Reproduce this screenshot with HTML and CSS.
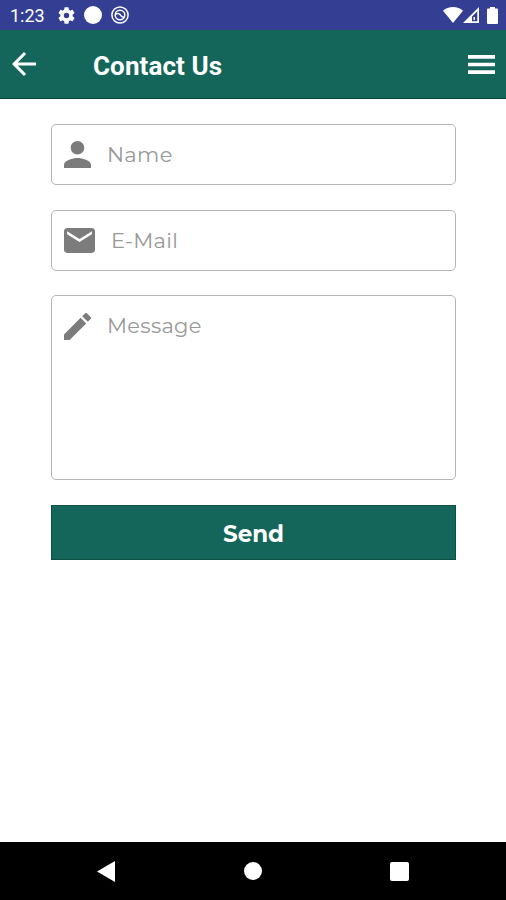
FILE: index.html
```html
<!DOCTYPE html>
<html lang="en">
<head>
  <meta charset="UTF-8" />
  <meta name="viewport" content="width=device-width, initial-scale=1" />
  <title>Contact Us</title>
  <link rel="stylesheet" href="styles.css">
</head>
<body>
  <div class="status-bar">
    <span class="time">1:23</span>
    <svg class="gear" viewBox="2 2 20 20"><path d="M19.14 12.94c.04-.3.06-.61.06-.94s-.02-.64-.07-.94l2.03-1.58a.49.49 0 0 0 .12-.61l-1.92-3.32a.49.49 0 0 0-.59-.22l-2.39.96c-.5-.38-1.03-.7-1.62-.94l-.36-2.54a.48.48 0 0 0-.48-.41h-3.84c-.24 0-.43.17-.47.41l-.36 2.54c-.59.24-1.13.57-1.62.94l-2.39-.96a.48.48 0 0 0-.59.22L2.74 8.87c-.12.21-.08.47.12.61l2.03 1.58c-.05.3-.09.63-.09.94s.02.64.07.94l-2.03 1.58a.49.49 0 0 0-.12.61l1.92 3.32c.12.22.37.29.59.22l2.39-.96c.5.38 1.03.7 1.62.94l.36 2.54c.05.24.24.41.48.41h3.84c.24 0 .44-.17.47-.41l.36-2.54c.59-.24 1.13-.56 1.62-.94l2.39.96c.22.08.47 0 .59-.22l1.92-3.32a.48.48 0 0 0-.12-.61zM12 15.2a3.2 3.2 0 1 1 0-6.4 3.2 3.2 0 0 1 0 6.4z"/></svg>
    <span class="dot"></span>
    <svg class="ring" viewBox="0 0 18 18" stroke="#fff" stroke-width="1.5">
      <circle cx="9" cy="9" r="8.1"/>
      <circle cx="9" cy="9" r="4.8"/>
      <path d="M4.800 8c2.200-1 3.700-.4 4.700 1.200.9 1.500 2 2.100 3.600 1.900"/>
    </svg>
    <div class="signals">
      <svg class="wifi" viewBox="0 0 20 16"><path d="M10 16 0 3.700C2.700 1.200 6.200 0 10 0s7.300 1.200 10 3.700z"/></svg>
      <svg class="cell" viewBox="0 0 16 16"><path fill-rule="evenodd" d="M16 0v16H0zM9 9.500v4.800h5.300V4.200z"/><path d="M10.500 10h1.500v3h-1.500z"/></svg>
      <svg class="battery" viewBox="0 0 11 17"><path d="M3 0h5v1.500h2q1 0 1 1V16q0 1-1 1H1q-1 0-1-1V2.500q0-1 1-1h2z"/></svg>
    </div>
  </div>

  <header class="app-bar">
    <button class="icon-btn" aria-label="Back">
      <svg class="back" viewBox="4 4 16 16"><path d="M20 11H7.830l5.590-5.590L12 4l-8 8 8 8 1.410-1.410L7.830 13H20z"/></svg>
    </button>
    <h1>Contact Us</h1>
    <button class="icon-btn" aria-label="Menu">
      <svg class="menu" viewBox="3 6 18 12" preserveAspectRatio="none"><path d="M3 18h18v-2.300H3zm0-4.850h18v-2.300H3zM3 6v2.300h18V6z"/></svg>
    </button>
  </header>

  <main>
    <form class="contact-form">
      <label class="field">
        <svg class="person" viewBox="4 4 16 16"><path d="M12 12c2.210 0 4-1.790 4-4s-1.790-4-4-4-4 1.790-4 4 1.790 4 4 4zm0 2c-2.670 0-8 1.340-8 4v2h16v-2c0-2.660-5.330-4-8-4z"/></svg>
        <input type="text" class="name" placeholder="Name">
      </label>
      <label class="field">
        <svg class="mail" viewBox="2 4 20 16"><path d="M20 4H4c-1.100 0-2 .9-2 2v12c0 1.100.9 2 2 2h16c1.100 0 2-.9 2-2V6c0-1.100-.9-2-2-2zm0 4-8 5-8-5V6l8 5 8-5z"/></svg>
        <input type="text" class="email" placeholder="E-Mail">
      </label>
      <label class="field message-field">
        <svg class="pencil" viewBox="3 3 18 18"><path d="M3 17.250V21h3.750L17.810 9.940l-3.750-3.750zM20.710 7.040a1 1 0 0 0 0-1.410l-2.340-2.340a1 1 0 0 0-1.410 0l-1.830 1.830 3.750 3.750z"/></svg>
        <textarea class="message" placeholder="Message"></textarea>
      </label>
      <button type="button" class="send-btn">Send</button>
    </form>
  </main>

  <nav class="nav-bar">
    <svg class="nav-back" viewBox="0 0 18 21"><path d="M18 0v21L0 10.500z"/></svg>
    <span class="nav-home"></span>
    <span class="nav-recent"></span>
  </nav>
</body>
</html>
```

FILE: styles.css
```css
* {
  box-sizing: border-box;
}
body {
  margin: 0;
  height: 900px;
  display: flex;
  flex-direction: column;
  background: #fff;
  font-family: Montserrat, Inter, sans-serif;
}
svg {
  display: block;
  flex: none;
  fill: currentColor;
}

/* Status bar */
.status-bar {
  height: 30px;
  display: flex;
  align-items: center;
  padding: 0 8px 0 10px;
  background: #343f94;
  color: #fff;
}
.time {
  width: 48px;
  font-family: Roboto, sans-serif;
  font-size: 18px;
  line-height: 30px;
  padding-top: 2px;
}
.gear {
  width: 17px;
  height: 17px;
}
.dot {
  width: 18px;
  height: 18px;
  margin: 0 9px;
  border-radius: 50%;
  background: #fff;
}
.ring {
  width: 18px;
  height: 18px;
  fill: none;
}
.signals {
  display: flex;
  margin-left: auto;
}
.wifi {
  width: 20px;
  height: 16px;
}
.cell {
  width: 16px;
  height: 16px;
  margin-right: 8px;
}
.battery {
  width: 11px;
  height: 17px;
}

/* Header */
.app-bar {
  height: 69px;
  display: flex;
  align-items: center;
  padding: 0 11px 0 12px;
  background: #14665a;
  border-bottom: 1px solid #08483a;
  color: #fff;
}
.icon-btn {
  padding: 0;
  border: none;
  background: none;
  color: inherit;
  cursor: pointer;
}
.back {
  width: 24px;
  height: 24px;
}
.menu {
  width: 27px;
  height: 19px;
}
h1 {
  flex: 1;
  margin: 0 0 0 57px;
  padding-top: 4px;
  font-family: Roboto, sans-serif;
  font-size: 26px;
  font-weight: 700;
  letter-spacing: 0.1px;
}

/* Form */
main {
  flex: 1;
  padding: 25px 50px 0 51px;
}
.contact-form {
  display: flex;
  flex-direction: column;
  gap: 25px;
}
.field {
  height: 61px;
  display: flex;
  align-items: center;
  padding: 0 12px;
  border: 1px solid #b5b5b5;
  border-radius: 5px;
  color: #7c7c7c;
}
.message-field {
  height: 185px;
  margin-top: -1px;
  align-items: flex-start;
  padding-top: 17px;
}
.person,
.pencil {
  width: 27px;
  height: 27px;
}
.mail {
  width: 31px;
  height: 25px;
}
.field input,
.field textarea {
  flex: 1;
  min-width: 0;
  margin: 0 0 0 16px;
  padding: 0 0 1px;
  border: none;
  outline: none;
  resize: none;
  background: none;
  font-family: inherit;
  font-size: 21px;
  line-height: 27px;
  letter-spacing: 0.3px;
  color: #333;
}
.field textarea {
  height: 150px;
  padding: 0;
  line-height: 26px;
}
.field ::placeholder {
  color: #999;
}
.send-btn {
  height: 55px;
  border: 1px solid #0b5040;
  background: #14665a;
  color: #fff;
  font-family: inherit;
  font-size: 23px;
  font-weight: 700;
  padding: 2px 0 0;
  cursor: pointer;
}

/* Navigation bar */
.nav-bar {
  height: 58px;
  display: flex;
  align-items: center;
  justify-content: space-between;
  padding: 0 97px;
  background: #000;
  color: #fff;
}
.nav-back {
  width: 18px;
  height: 21px;
}
.nav-home {
  width: 18px;
  height: 18px;
  border-radius: 50%;
  background: #fff;
}
.nav-recent {
  width: 19px;
  height: 19px;
  border-radius: 2px;
  background: #fff;
}
```
